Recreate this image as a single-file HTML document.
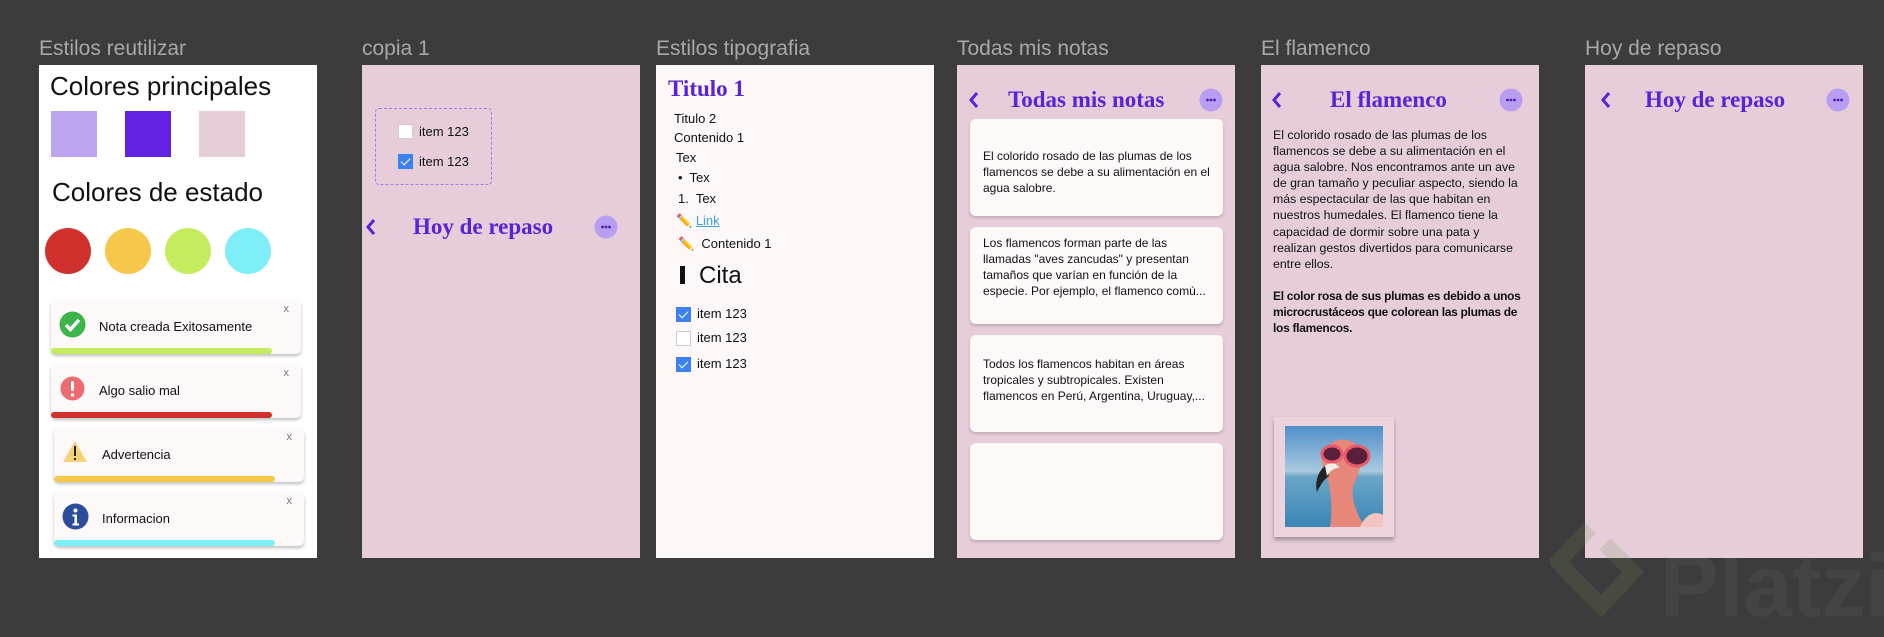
<!DOCTYPE html>
<html><head><meta charset="utf-8"><style>
*{margin:0;padding:0;box-sizing:border-box}
body{width:1884px;height:632px;background:#3c3c3c;position:relative;overflow:hidden;font-family:"Liberation Sans",sans-serif;color:#111}
.a{position:absolute}
.lbl{position:absolute;top:37px;font-size:21px;color:#a8a8a8;white-space:nowrap}
.fr{position:absolute;top:65px;width:278px;height:493px}
.pink{background:#e6cdd9}
.st{font-family:"Liberation Serif",serif;font-weight:bold;color:#5b22d6;font-size:23px;white-space:nowrap;line-height:30px}
.dots{position:absolute;width:24px;height:24px}
.toast{position:absolute;background:#fdf9f8;border-radius:5px;box-shadow:0 2px 3px rgba(0,0,0,.25);width:250px;height:54px}
.toast .t{position:absolute;left:48px;top:19px;font-size:13px}
.toast .x{position:absolute;right:12px;top:3px;font-size:11px;color:#777}
.toast .bar{position:absolute;left:0;bottom:0;width:221px;height:6px;border-radius:3px}
.cb{position:absolute;width:15px;height:15px;border:1px solid #ccc;background:#fff}
.cb.on{background:#3b82f0;border-color:#3b82f0}
.cb.on:after{content:"";position:absolute;left:4px;top:1px;width:4px;height:8px;border:solid #fff;border-width:0 1.5px 1.5px 0;transform:rotate(45deg)}
.card{position:absolute;left:13px;width:253px;height:97px;background:#fdf9f9;border-radius:6px;box-shadow:0 2px 3px rgba(0,0,0,.18);font-size:12px;line-height:16.1px;padding-left:13px;padding-right:10px}
.s{font-size:13px;white-space:nowrap;line-height:16px}
</style></head><body>

<div class="lbl" style="left:39px">Estilos reutilizar</div>
<div class="lbl" style="left:362px">copia 1</div>
<div class="lbl" style="left:656px">Estilos tipografia</div>
<div class="lbl" style="left:957px">Todas mis notas</div>
<div class="lbl" style="left:1261px">El flamenco</div>
<div class="lbl" style="left:1585px">Hoy de repaso</div>

<svg width="0" height="0" style="position:absolute"><defs>
<g id="dt"><circle cx="12" cy="12" r="11.5" fill="#b99df0"/><circle cx="8.5" cy="12" r="1.4" fill="#4a1fb0"/><circle cx="12" cy="12" r="1.4" fill="#4a1fb0"/><circle cx="15.5" cy="12" r="1.4" fill="#4a1fb0"/></g>
<path id="chev" d="M9 2L3 9l6 7" stroke="#5b22d6" stroke-width="3" fill="none"/>
</defs></svg>

<!-- Frame 1 -->
<div class="fr" style="left:39px;background:#fff">
  <div class="a" style="left:11px;top:6px;font-size:26px;white-space:nowrap">Colores principales</div>
  <div class="a" style="left:12px;top:46px;width:46px;height:46px;background:#bca4f0"></div>
  <div class="a" style="left:86px;top:46px;width:46px;height:46px;background:#6222e4"></div>
  <div class="a" style="left:160px;top:46px;width:46px;height:46px;background:#e6cfd9"></div>
  <div class="a" style="left:13px;top:112px;font-size:26px;white-space:nowrap">Colores de estado</div>
  <div class="a" style="left:6px;top:163px;width:46px;height:46px;border-radius:50%;background:#d0312d"></div>
  <div class="a" style="left:66px;top:163px;width:46px;height:46px;border-radius:50%;background:#f5c84c"></div>
  <div class="a" style="left:126px;top:163px;width:46px;height:46px;border-radius:50%;background:#c5ec5f"></div>
  <div class="a" style="left:186px;top:163px;width:46px;height:46px;border-radius:50%;background:#7eeef7"></div>

  <div class="toast" style="left:12px;top:235px">
    <svg class="a" style="left:8px;top:11px" width="27" height="27" viewBox="0 0 27 27"><circle cx="13.5" cy="13.5" r="13" fill="#3db54a"/><path d="M7 14l4.5 4.5L20 9" stroke="#fff" stroke-width="3.5" fill="none"/></svg>
    <div class="t">Nota creada Exitosamente</div><div class="x">x</div>
    <div class="bar" style="background:#c5ec5f"></div></div>
  <div class="toast" style="left:12px;top:299px">
    <svg class="a" style="left:9px;top:12px" width="25" height="25" viewBox="0 0 25 25"><circle cx="12.5" cy="12.5" r="12" fill="#ec6b70"/><rect x="11" y="5" width="3" height="10" rx="1.5" fill="#fff"/><circle cx="12.5" cy="19" r="1.7" fill="#fff"/></svg>
    <div class="t">Algo salio mal</div><div class="x">x</div>
    <div class="bar" style="background:#d0312d"></div></div>
  <div class="toast" style="left:15px;top:363px">
    <svg class="a" style="left:8px;top:12px" width="26" height="23" viewBox="0 0 26 23"><path d="M13 1L25 22H1z" fill="#f5d27a"/><rect x="12" y="6" width="2" height="10" fill="#222"/><rect x="12" y="18" width="2" height="2" fill="#222"/></svg>
    <div class="t">Advertencia</div><div class="x">x</div>
    <div class="bar" style="background:#f5c84c"></div></div>
  <div class="toast" style="left:15px;top:427px">
    <svg class="a" style="left:8px;top:11px" width="27" height="27" viewBox="0 0 27 27"><circle cx="13.5" cy="13.5" r="13" fill="#2c4d9c"/><circle cx="13.5" cy="7.5" r="2" fill="#fff"/><path d="M10.5 11.5h4.5v9h2v2h-6.5v-2h2v-7h-2z" fill="#fff"/></svg>
    <div class="t">Informacion</div><div class="x">x</div>
    <div class="bar" style="background:#7eeef7"></div></div>
</div>

<!-- Frame 2 -->
<div class="fr pink" style="left:362px">
  <div class="a" style="left:13px;top:43px;width:117px;height:77px;border:1.5px dashed #a577ea;border-radius:4px"></div>
  <div class="cb" style="left:36px;top:59px"></div><div class="a s" style="left:57px;top:59px">item 123</div>
  <div class="cb on" style="left:36px;top:89px"></div><div class="a s" style="left:57px;top:89px">item 123</div>
  <svg class="a" style="left:3px;top:153px" width="12" height="18" viewBox="0 0 12 18"><use href="#chev"/></svg>
  <div class="a st" style="left:51px;top:147px">Hoy de repaso</div>
  <svg class="dots" style="left:232px;top:150px" viewBox="0 0 24 24"><use href="#dt"/></svg>
</div>

<!-- Frame 3 -->
<div class="fr" style="left:656px;background:#fdf7f8">
  <div class="a st" style="left:12px;top:9px;font-size:23px">Titulo 1</div>
  <div class="a s" style="left:18px;top:46px">Titulo 2</div>
  <div class="a s" style="left:18px;top:65px">Contenido 1</div>
  <div class="a s" style="left:20px;top:85px">Tex</div>
  <div class="a s" style="left:22px;top:105px">•&nbsp; Tex</div>
  <div class="a s" style="left:22px;top:126px">1.&nbsp; Tex</div>
  <div class="a s" style="left:20px;top:148px">✏️ <span style="color:#3aa3d9;text-decoration:underline">Link</span></div>
  <div class="a s" style="left:22px;top:171px">✏️&nbsp; Contenido 1</div>
  <div class="a" style="left:24px;top:201px;width:5px;height:18px;background:#111"></div>
  <div class="a" style="left:43px;top:196px;font-size:24px;line-height:30px">Cita</div>
  <div class="cb on" style="left:20px;top:242px"></div><div class="a s" style="left:41px;top:241px">item 123</div>
  <div class="cb" style="left:20px;top:266px"></div><div class="a s" style="left:41px;top:265px">item 123</div>
  <div class="cb on" style="left:20px;top:292px"></div><div class="a s" style="left:41px;top:291px">item 123</div>
</div>

<!-- Frame 4 -->
<div class="fr pink" style="left:957px">
  <svg class="a" style="left:11px;top:26px" width="12" height="18" viewBox="0 0 12 18"><use href="#chev"/></svg>
  <div class="a st" style="left:51px;top:20px">Todas mis notas</div>
  <svg class="dots" style="left:242px;top:23px" viewBox="0 0 24 24"><use href="#dt"/></svg>
  <div class="card" style="top:54px;padding-top:29px">El colorido rosado de las plumas de los flamencos se debe a su alimentación en el agua salobre.</div>
  <div class="card" style="top:162px;padding-top:8px">Los flamencos forman parte de las llamadas "aves zancudas" y presentan tamaños que varían en función de la especie. Por ejemplo, el flamenco comú...</div>
  <div class="card" style="top:270px;padding-top:21px">Todos los flamencos habitan en áreas tropicales y subtropicales. Existen flamencos en Perú, Argentina, Uruguay,...</div>
  <div class="card" style="top:378px"></div>
</div>

<!-- Frame 5 -->
<div class="fr pink" style="left:1261px">
  <svg class="a" style="left:10px;top:26px" width="12" height="18" viewBox="0 0 12 18"><use href="#chev"/></svg>
  <div class="a st" style="left:69px;top:20px">El flamenco</div>
  <svg class="dots" style="left:238px;top:23px" viewBox="0 0 24 24"><use href="#dt"/></svg>
  <div class="a" style="left:12px;top:62px;width:252px;font-size:12.3px;line-height:16.1px">El colorido rosado de las plumas de los flamencos se debe a su alimentación en el agua salobre. Nos encontramos ante un ave de gran tamaño y peculiar aspecto, siendo la más espectacular de las que habitan en nuestros humedales. El flamenco tiene la capacidad de dormir sobre una pata y realizan gestos divertidos para comunicarse entre ellos.<br><br><b style="letter-spacing:-0.3px;font-size:12px">El color rosa de sus plumas es debido a unos microcrustáceos que colorean las plumas de los flamencos.</b></div>
  <div class="a" style="left:13px;top:352px;width:120px;height:120px;background:#ecd3dc;box-shadow:0 3px 4px rgba(0,0,0,.3)">
    <svg class="a" style="left:11px;top:9px" width="98" height="101" viewBox="0 0 98 101">
      <defs><linearGradient id="sk" x1="0" y1="0" x2="0" y2="1"><stop offset="0" stop-color="#4f8fc9"/><stop offset=".45" stop-color="#a9c9df"/><stop offset=".5" stop-color="#6aa5c8"/><stop offset="1" stop-color="#3a86b5"/></linearGradient></defs>
      <rect width="98" height="101" fill="url(#sk)"/>
      <path d="M45 101C48 80 46 60 40 45 30 30 45 10 62 14 80 18 78 40 70 55 64 68 70 85 80 101z" fill="#e7877a"/>
      <path d="M40 40c-8 6-10 18-8 26 3-6 6-12 12-16z" fill="#222"/>
      <path d="M40 40c4-4 12-4 14 2-6 0-10 4-12 8z" fill="#f1efe8"/>
      <ellipse cx="47" cy="28" rx="10" ry="8" fill="#5a1f3b" stroke="#e75b6b" stroke-width="3"/>
      <ellipse cx="72" cy="30" rx="12" ry="10" fill="#5a1f3b" stroke="#e75b6b" stroke-width="3"/>
      <path d="M75 101c6-14 16-16 23-12v12z" fill="#f3c3c0"/>
    </svg>
  </div>
</div>

<!-- Frame 6 -->
<div class="fr pink" style="left:1585px">
  <svg class="a" style="left:15px;top:26px" width="12" height="18" viewBox="0 0 12 18"><use href="#chev"/></svg>
  <div class="a st" style="left:60px;top:20px">Hoy de repaso</div>
  <svg class="dots" style="left:241px;top:23px" viewBox="0 0 24 24"><use href="#dt"/></svg>
</div>

<!-- Platzi watermark -->
<svg class="a" style="left:1550px;top:522px" width="95" height="105" viewBox="0 0 95 105"><path d="M40 6L8 40l35 36 M55 22l28 28-32 34-14-14" stroke="#7a8a55" stroke-opacity=".18" stroke-width="16" fill="none"/></svg>
<div class="a" style="left:1660px;top:535px;font-size:88px;color:#fff;opacity:.04;font-weight:bold;white-space:nowrap">Platzi</div>
</body></html>
